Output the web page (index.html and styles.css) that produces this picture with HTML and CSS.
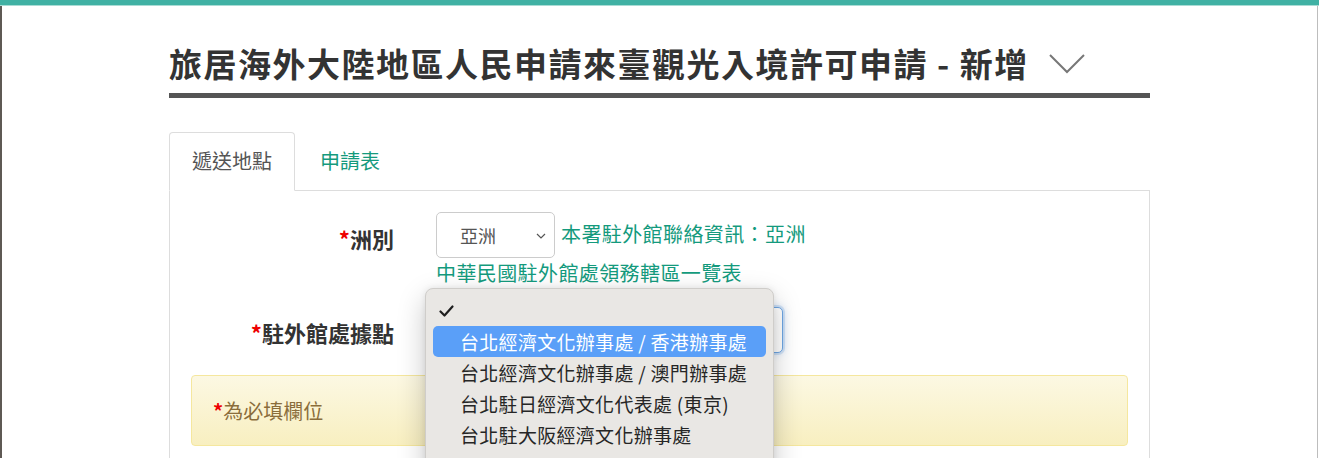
FILE: index.html
```html
<!DOCTYPE html>
<html lang="zh-Hant">
<head>
<meta charset="utf-8">
<title>旅居海外大陸地區人民申請來臺觀光入境許可申請 - 新增</title>
<link rel="stylesheet" href="styles.css">
</head>
<body>
<div class="topbar"></div>
<div class="frame">
  <main class="container">
    <h1 class="title">
      <span class="title-text">旅居海外大陸地區人民申請來臺觀光入境許可申請 - 新增</span>
      <svg class="title-chevron" width="36" height="20" viewBox="0 0 36 20" aria-hidden="true">
        <polyline points="1,1 18,18 35,1" fill="none" stroke="#777" stroke-width="2"/>
      </svg>
    </h1>

    <ul class="tabs">
      <li class="tab tab-active">遞送地點</li>
      <li class="tab">申請表</li>
    </ul>

    <div class="panel">
      <div class="row row-first">
        <div class="label"><span class="req">*</span>洲別</div>
        <div class="control">
          <div class="line">
            <div class="select select-small">
              <span class="select-value">亞洲</span>
              <svg class="select-arrow" width="10" height="6" viewBox="0 0 10 6" aria-hidden="true">
                <polyline points="1,1 5,5 9,1" fill="none" stroke="#555" stroke-width="1.2"/>
              </svg>
            </div>
            <a class="link link-inline">本署駐外館聯絡資訊：亞洲</a>
          </div>
          <a class="link link-block">中華民國駐外館處領務轄區一覽表</a>
        </div>
      </div>

      <div class="row row-second">
        <div class="label label-second"><span class="req">*</span>駐外館處據點</div>
        <div class="control control-rel">
          <div class="select select-wide select-focus">
            <span class="select-value"></span>
            <svg class="select-arrow" width="10" height="6" viewBox="0 0 10 6" aria-hidden="true">
              <polyline points="1,1 5,5 9,1" fill="none" stroke="#555" stroke-width="1.2"/>
            </svg>
          </div>
          <ul class="popup">
            <li class="opt">
              <svg class="check" width="15" height="12" viewBox="0 0 15 12" aria-hidden="true">
                <polyline points="1.5,6.5 5.5,10.5 13.5,1.5" fill="none" stroke="#1e1e1e" stroke-width="2.2" stroke-linecap="round" stroke-linejoin="round"/>
              </svg>
            </li>
            <li class="opt opt-hl">台北經濟文化辦事處 / 香港辦事處</li>
            <li class="opt">台北經濟文化辦事處 / 澳門辦事處</li>
            <li class="opt">台北駐日經濟文化代表處 (東京)</li>
            <li class="opt">台北駐大阪經濟文化辦事處</li>
          </ul>
        </div>
      </div>

      <div class="alert"><span class="req">*</span>為必填欄位</div>
    </div>
  </main>
</div>
</body>
</html>
```

FILE: styles.css
```css
html, body {
  margin: 0;
  padding: 0;
  height: 458px;
  overflow: hidden;
  background: #fff;
}
body {
  font-family: "Noto Sans CJK TC", "Noto Sans", "Liberation Sans", sans-serif;
  color: #333;
}
.topbar {
  height: 5px;
  background: #40b1a4;
  border-bottom: 1px solid #a9dcd5;
}
.frame {
  border-left: 2px solid #5e5954;
  border-right: 1px solid #bdbdbd;
  margin-right: 1px;
  height: 452px;
  box-sizing: border-box;
}
.container {
  margin-left: 167px;
  width: 981px;
}
.title {
  margin: 0;
  padding-top: 28px;
  height: 59px;
  display: flex;
  align-items: center;
  border-bottom: 5px solid #555;
  font-size: 33px;
  font-weight: 700;
  color: #333;
  line-height: 59px;
  letter-spacing: 1.5px;
  white-space: nowrap;
}
.title-chevron {
  margin-left: 20px;
  margin-top: 0;
}
.tabs {
  list-style: none;
  margin: 34px 0 0;
  padding: 0;
  display: flex;
  border-bottom: 1px solid #ddd;
  height: 58px;
}
.tab {
  box-sizing: border-box;
  height: 59px;
  padding: 0 22px;
  margin-right: 2px;
  font-size: 20px;
  line-height: 55px;
  color: #149a7d;
  border: 1px solid transparent;
  border-radius: 4px 4px 0 0;
}
.tab-active {
  color: #555;
  background: #fff;
  border-color: #ddd;
  border-bottom-color: #fff;
}
.panel {
  border: 1px solid #ddd;
  border-top: none;
  border-radius: 0 0 4px 4px;
  padding: 21px 21px 40px;
}
.row {
  display: flex;
}
.label {
  width: 203px;
  flex: none;
  text-align: right;
  font-size: 22px;
  font-weight: 700;
  color: #333;
  padding-top: 10px;
  line-height: 32px;
  margin-right: 42px;
}
.req {
  color: #e00;
  font-weight: 700;
}
.control {
  display: flex;
  flex-direction: column;
}
.line {
  display: flex;
  align-items: center;
  height: 46px;
}
.select {
  box-sizing: border-box;
  height: 46px;
  border: 1px solid #ccc;
  border-radius: 5px;
  background: #fff;
  display: flex;
  align-items: center;
  position: relative;
}
.select-small {
  width: 119px;
  padding-left: 23px;
}
.select-value {
  font-size: 18px;
  color: #555;
}
.select-arrow {
  position: absolute;
  right: 8px;
  top: 20px;
}
.link {
  color: #149a7d;
  font-size: 20px;
  letter-spacing: 0.4px;
  text-decoration: none;
}
.link-inline {
  margin-left: 6px;
  line-height: 28px;
  margin-top: -3px;
}
.link-block {
  line-height: 30px;
}
.row-second {
  margin-top: 19px;
}
.label-second {
  padding-top: 9px;
}
.control-rel {
  position: relative;
}
.select-wide {
  width: 347px;
}
.select-focus {
  border-color: #6ea6e3;
  box-shadow: 0 0 0 2px rgba(110, 166, 227, 0.25), 0 0 8px rgba(90, 150, 230, 0.35);
}
.popup {
  position: absolute;
  left: -11px;
  top: -19px;
  width: 349px;
  box-sizing: border-box;
  margin: 0;
  padding: 6px 7px 40px;
  list-style: none;
  background: #e9e7e4;
  border: 1px solid #cfcdca;
  border-radius: 8px;
  box-shadow: 0 10px 28px rgba(0, 0, 0, 0.22), 0 0 6px rgba(0, 0, 0, 0.08);
  z-index: 5;
}
.opt {
  height: 31px;
  line-height: 31px;
  padding-left: 27px;
  font-size: 19px;
  letter-spacing: 0.3px;
  color: #262626;
  border-radius: 5px;
  white-space: nowrap;
  position: relative;
}
.check {
  position: absolute;
  left: 6px;
  top: 10px;
}
.opt-hl {
  background: #5a9ff8;
  color: #fff;
}
.alert {
  margin-top: 22px;
  height: 71px;
  box-sizing: border-box;
  padding-left: 21px;
  display: flex;
  align-items: center;
  font-size: 20px;
  color: #8a6d3b;
  background: linear-gradient(#fcf8e3, #f8efc0);
  border: 1px solid #f5e79e;
  border-radius: 4px;
}
```
